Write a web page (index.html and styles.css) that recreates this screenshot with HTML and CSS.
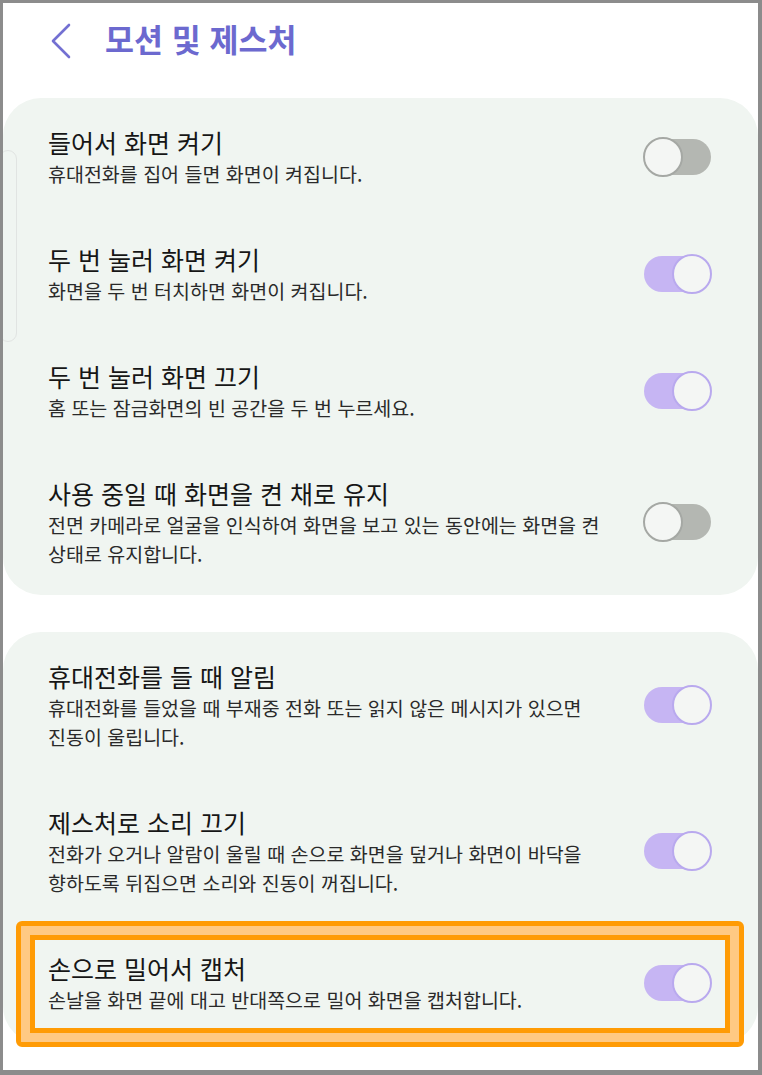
FILE: index.html
```html
<!DOCTYPE html>
<html lang="ko">
<head>
	<meta charset="UTF-8">
	<meta name="viewport" content="width=device-width, initial-scale=1.0">
	<title>모션 및 제스처</title>
	<link rel="stylesheet" href="styles.css">
</head>
<body>
	<div class="frame">
		<div class="edge-handle"></div>
		<div class="header">
			<svg class="back" width="22" height="36" viewBox="0 0 22 36">
				<polyline points="19,2 3,18 19,34" fill="none" stroke="#7370d2" stroke-width="2.6" stroke-linecap="round" stroke-linejoin="round"/>
			</svg>
			<h1 class="title">모션 및 제스처</h1>
		</div>

		<div class="card">
			<div class="row">
				<div class="text">
					<div class="name">들어서 화면 켜기</div>
					<div class="desc">휴대전화를 집어 들면 화면이 켜집니다.</div>
				</div>
				<div class="switch"><span class="knob"></span></div>
			</div>
			<div class="row">
				<div class="text">
					<div class="name">두 번 눌러 화면 켜기</div>
					<div class="desc">화면을 두 번 터치하면 화면이 켜집니다.</div>
				</div>
				<div class="switch on"><span class="knob"></span></div>
			</div>
			<div class="row">
				<div class="text">
					<div class="name">두 번 눌러 화면 끄기</div>
					<div class="desc">홈 또는 잠금화면의 빈 공간을 두 번 누르세요.</div>
				</div>
				<div class="switch on"><span class="knob"></span></div>
			</div>
			<div class="row">
				<div class="text">
					<div class="name">사용 중일 때 화면을 켠 채로 유지</div>
					<div class="desc">전면 카메라로 얼굴을 인식하여 화면을 보고 있는 동안에는 화면을 켠 상태로 유지합니다.</div>
				</div>
				<div class="switch"><span class="knob"></span></div>
			</div>
		</div>

		<div class="card">
			<div class="row">
				<div class="text">
					<div class="name">휴대전화를 들 때 알림</div>
					<div class="desc">휴대전화를 들었을 때 부재중 전화 또는 읽지 않은 메시지가 있으면 진동이 울립니다.</div>
				</div>
				<div class="switch on"><span class="knob"></span></div>
			</div>
			<div class="row">
				<div class="text">
					<div class="name">제스처로 소리 끄기</div>
					<div class="desc">전화가 오거나 알람이 울릴 때 손으로 화면을 덮거나 화면이 바닥을 향하도록 뒤집으면 소리와 진동이 꺼집니다.</div>
				</div>
				<div class="switch on"><span class="knob"></span></div>
			</div>
			<div class="row marked">
				<div class="text">
					<div class="name">손으로 밀어서 캡처</div>
					<div class="desc">손날을 화면 끝에 대고 반대쪽으로 밀어 화면을 캡처합니다.</div>
				</div>
				<div class="switch on"><span class="knob"></span></div>
				<div class="highlight"></div>
			</div>
		</div>
	</div>
</body>
</html>
```

FILE: styles.css
```css
html, body { margin: 0; height: 100%; background: #fff; }
body { font-family: "Noto Sans CJK KR", "Noto Sans", sans-serif; color: #141414; }

.frame { position: relative; height: 1075px; box-sizing: border-box; border: solid #8c8c8c; border-width: 3px 4px 5px 3px; background: #fff; overflow: hidden; }

/* faint side handle peeking at the left edge */
.edge-handle { position: absolute; left: -4px; top: 147px; width: 16px; height: 190px; border: 1.5px solid #e1e4e2; border-radius: 9px; }

.header { display: flex; align-items: flex-start; height: 95px; padding: 19px 0 0 47px; box-sizing: border-box; }
.back { display: block; margin-top: 1px; }
.title { margin: -5px 0 0 33px; font-size: 31.5px; line-height: 42px; font-weight: 700; color: #6c69cf; }

.card { background: #f0f5f1; border-radius: 38px; }
.card + .card { margin-top: 37px; padding-bottom: 3px; }

.row { display: flex; align-items: center; gap: 24px; padding: 27px 47px 27px 45px; }
.text { flex: 1; min-width: 0; word-break: keep-all; }
.name { font-size: 25px; line-height: 34px; color: #161616; }
.desc { font-size: 19.5px; line-height: 29px; color: #2a2a2a; }

.switch { flex: none; display: flex; align-items: center; width: 67px; height: 36px; border-radius: 18px; background: #b4b7b2; }
.knob { flex: none; width: 40px; height: 40px; margin-left: -1px; box-sizing: border-box; border-radius: 50%; border: 2px solid #a5a8a4; background: #f4f6f4; }
.switch.on { justify-content: flex-end; background: #c6b5f3; }
.switch.on .knob { margin-left: 0; margin-right: -1px; border-color: #b9a9ee; }

/* orange callout around the last row */
.marked { position: relative; }
.highlight { position: absolute; left: 13px; right: 14px; top: -3px; bottom: -6px; border: 5px solid #ff9b05; border-radius: 6px; box-shadow: inset 0 0 0 9px #ffc983; }
.highlight::after { content: ""; position: absolute; inset: 9px; border: 5px solid #ff9b05; }
```
